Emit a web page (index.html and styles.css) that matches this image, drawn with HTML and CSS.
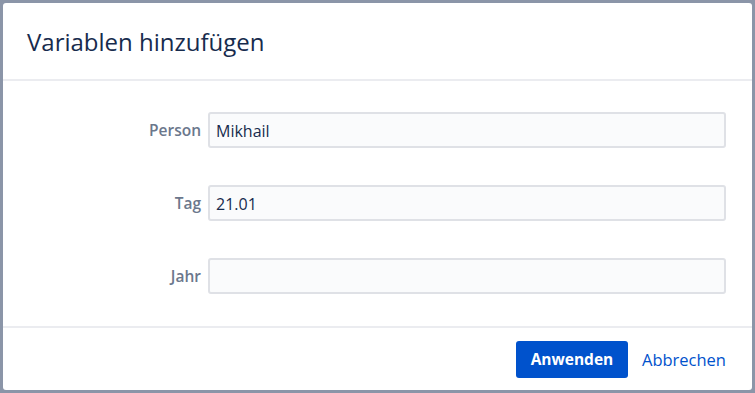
FILE: index.html
```html
<!DOCTYPE html>
<html lang="de">

<head>
    <meta charset="UTF-8">
    <meta name="viewport" content="width=device-width, initial-scale=1.0">
    <link rel="stylesheet" href="styles.css">
    <title>Variablen hinzufügen</title>
</head>

<body>
    <div class="dialog">
        <div class="dialog-header">
            <h1 class="title">Variablen hinzufügen</h1>
        </div>

        <form class="fields">
            <label class="field-label" for="person">Person</label>
            <input class="field-input" id="person" type="text" value="Mikhail">

            <label class="field-label" for="tag">Tag</label>
            <input class="field-input" id="tag" type="text" value="21.01">

            <label class="field-label" for="jahr">Jahr</label>
            <input class="field-input" id="jahr" type="text" value="">
        </form>

        <div class="dialog-footer">
            <button class="btn primary" type="button">Anwenden</button>
            <button class="btn link" type="button">Abbrechen</button>
        </div>
    </div>
</body>

</html>
```

FILE: styles.css
```css
* {
    margin: 0;
    padding: 0;
    box-sizing: border-box;
}

body {
    background: #8b95a8;
    padding: 3px;
    font-family: "Open Sans", sans-serif;
    color: #172b4d;
}

.dialog {
    width: 749px;
    height: 387px;
    background: #fff;
    border-radius: 3px;
    display: flex;
    flex-direction: column;
}

.dialog-header {
    height: 78px;
    padding-left: 24px;
    display: flex;
    align-items: center;
    border-bottom: 2px solid #ebecf0;
}

.title {
    font-size: 24px;
    font-weight: 400;
    color: #172b4d;
}

.fields {
    flex: 1;
    display: grid;
    grid-template-columns: 198px 1fr;
    column-gap: 7px;
    row-gap: 37px;
    align-content: start;
    align-items: center;
    padding: 31px 26px 0 0;
}

.field-label {
    text-align: right;
    font-size: 15.5px;
    font-weight: 600;
    color: #6b778c;
}

.field-input {
    height: 36px;
    background: #fafbfc;
    border: 2px solid #dfe1e6;
    border-radius: 3px;
    padding: 2px 6px 0;
    font-family: inherit;
    font-size: 16px;
    color: #172b4d;
    outline: none;
}

.dialog-footer {
    height: 64px;
    border-top: 2px solid #ebecf0;
    display: flex;
    justify-content: flex-end;
    align-items: center;
    gap: 4px;
    padding-right: 16px;
}

.btn {
    height: 37px;
    border: none;
    border-radius: 3px;
    font-family: inherit;
    background: none;
    cursor: pointer;
}

.primary {
    width: 112px;
    background: #0052cc;
    color: #fff;
    font-size: 15.5px;
    font-weight: 700;
}

.link {
    padding: 0 10px;
    color: #0052cc;
    font-size: 16.5px;
}
```
